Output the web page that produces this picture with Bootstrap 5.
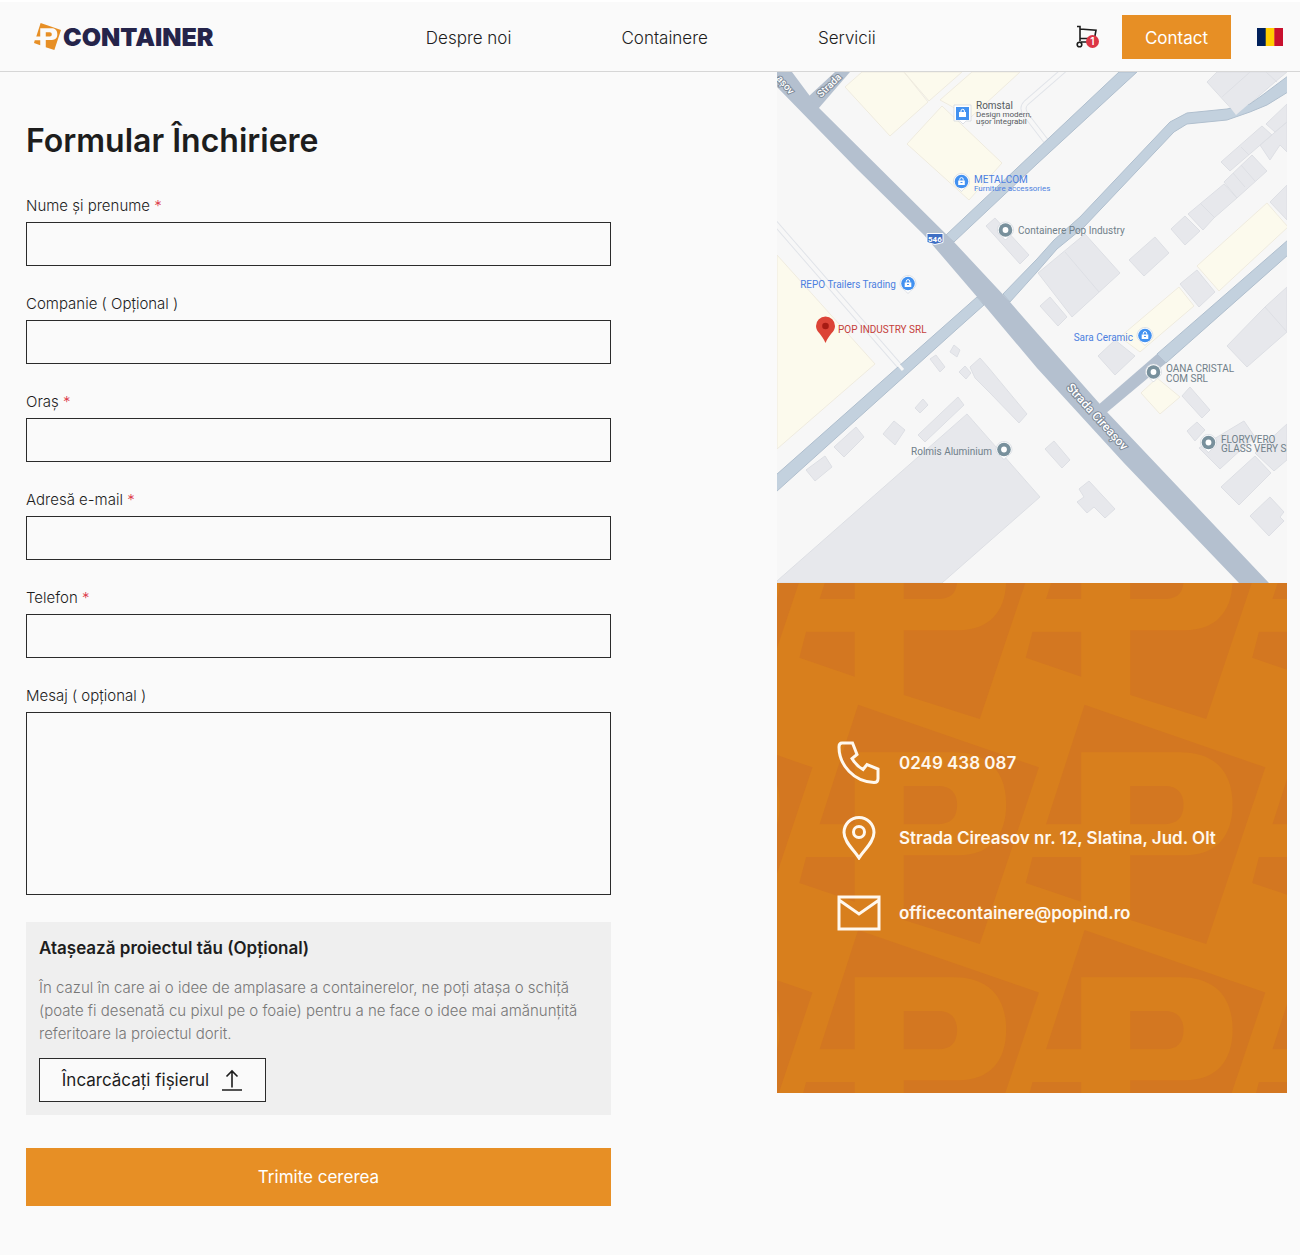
<!DOCTYPE html>
<html lang="ro">
<head>
<meta charset="utf-8">
<meta name="viewport" content="width=device-width, initial-scale=1">
<title>Formular Închiriere</title>
<link href="https://cdn.jsdelivr.net/npm/bootstrap@5.3.0/dist/css/bootstrap.min.css" rel="stylesheet">
<style>
body{background:#fafafa;color:#1d1d1d;font-family:"Inter","Liberation Sans",sans-serif;font-size:15px;line-height:24px}
.site-head{border-top:2px solid #fff;border-bottom:1px solid #d6d6d6;height:72px;padding:0 17px 0 34px}
.brand{color:#25244a;font-weight:900;font-size:25px;line-height:28px;gap:2px;text-decoration:none}
.brand svg{width:27px;height:27px}
.main-links{gap:110px;padding:2px 0 0 12px;font-size:17px;font-weight:300}
.main-links a{color:#1d1d1d;text-decoration:none}
.tools{gap:22px}
.cart svg{display:block;width:24px;height:26px}
.cart-count{position:absolute;left:10px;top:11px;width:13px;height:13px;font-size:10px;line-height:13px;background:#dc3545;color:#fff;border-radius:50%;text-align:center;font-weight:600}
.btn-brand{--bs-btn-color:#fff;--bs-btn-bg:#e78f25;--bs-btn-hover-color:#fff;--bs-btn-hover-bg:#d87f1d;--bs-btn-active-bg:#d87f1d;--bs-btn-active-color:#fff;--bs-btn-border-radius:0;--bs-btn-border-width:0;font-size:17px;font-weight:400;padding:8px 12px 6px}
.btn-contact{width:109px;height:44px;line-height:30px}
.flag{width:26px;height:18px;display:block}
.form-col{width:47%;padding-left:26px}
.side-col{width:40.23%;padding-right:13px}
h1{font-size:32px;line-height:40px;font-weight:600;margin:49px 0 33px}
.field{margin-bottom:26px}
.field label{display:block;font-weight:300;margin-bottom:4px;font-size:15px}
.field label span{color:#dc3545}
.field .form-control{height:44px;border:1px solid #2b2b2b;border-radius:0;background:transparent}
.field textarea.form-control{height:183px;resize:none}
.attach{background:#efefef;padding:13px;margin-top:27px}
.attach h2{font-size:17px;line-height:26px;font-weight:600;margin:0 0 15px}
.attach p{font-size:15px;line-height:23px;font-weight:300;color:#777;margin:0 0 13px}
.btn-upload{--bs-btn-color:#1d1d1d;--bs-btn-bg:#fafafa;--bs-btn-border-color:#2b2b2b;--bs-btn-border-radius:0;width:227px;height:44px;font-size:17px;gap:12px;padding:2px 0 0}
.btn-upload svg{width:22px;height:24px}
.btn-send{height:58px;margin-top:33px;margin-bottom:49px}
.map{display:block;width:100%}
.map text{font-family:Roboto,sans-serif;font-size:10px}
.map .street{font-size:12px}
.map .note{font-size:8px}
.info{background:#d87f1d;aspect-ratio:1;padding:0 60px;color:#fff8ee;font-size:17px;font-weight:600}
.info a{color:inherit;text-decoration:none}
.info .motif{position:absolute;inset:0;width:100%;height:100%}
.info ul{position:relative;gap:31px}
.info li{gap:18px}
.info li svg{width:44px;height:44px;flex:none;fill:none;stroke:#fff8ee;stroke-width:3}
</style>
<script src="https://cdn.jsdelivr.net/npm/bootstrap@5.3.0/dist/js/bootstrap.bundle.min.js" defer></script>
</head>
<body>
<svg width="0" height="0" class="position-absolute" aria-hidden="true">
<defs>
<g id="emblem">
<path d="M262 380L797 565L622 1088L397 1017V825H560C650 825 700 770 700 675C700 570 640 520 545 520H252V733H148Z"/>
<path d="M397 620H500C535 620 555 640 555 676C555 715 535 733 500 733H397ZM108 830H252V963L88 907Z"/>
</g>
<g id="shop"><path d="M-8 0a8 8 0 1 1 16 0c0 5-5 6-8 10c-3-4-8-5-8-10z" fill="#fff" stroke="#c9ced6" stroke-width=".6"/><circle r="6.8" fill="#4291f0"/><rect x="-3.3" y="-1" width="6.6" height="4.5" fill="#fff"/><path d="M-1.7-1v-1.2a1.7 1.7 0 0 1 3.4 0V-1" fill="none" stroke="#fff"/><path d="M-1 1h2" stroke="#4291f0"/></g>
<g id="place"><path d="M-8 0a8 8 0 1 1 16 0c0 5-5 6-8 10c-3-4-8-5-8-10z" fill="#fff" stroke="#c9ced6" stroke-width=".6"/><circle r="6.8" fill="#78909c"/><circle r="2.9" fill="#fff"/></g>
</defs>
</svg>

<header class="site-head d-flex align-items-center justify-content-between">
<a class="brand d-flex align-items-center" href="#"><svg viewBox="88 380 709 708" fill="#e78f25" aria-hidden="true"><use href="#emblem"/></svg><span>CONTAINER</span></a>
<nav class="main-links d-flex"><a href="#">Despre noi</a><a href="#">Containere</a><a href="#">Servicii</a></nav>
<div class="tools d-flex align-items-center">
<a class="cart position-relative" href="#" aria-label="Coș"><svg viewBox="0 0 24 26" fill="none" stroke="#1d1d1d" stroke-width="1.6"><path d="M1 2.5H4V17.5M4 5L20 6.2L18.5 14.5H4M5 18H14"/><circle cx="3.5" cy="20.5" r="2.3"/></svg><span class="cart-count">1</span></a>
<button type="button" class="btn btn-brand btn-contact">Contact</button>
<svg class="flag ms-1" viewBox="0 0 26 18" role="img" aria-label="Română"><path fill="#00205b" d="M0 0h9v18H0z"/><path fill="#ffcd00" d="M8.700 0h9v18h-9z"/><path fill="#c8102e" d="M17.300 0H26v18h-8.700z"/></svg>
</div>
</header>

<main class="d-flex justify-content-between align-items-start">
<form class="form-col">
<h1>Formular Închiriere</h1>
<div class="field"><label for="nume">Nume și prenume <span>*</span></label><input id="nume" type="text" class="form-control"></div>
<div class="field"><label for="companie">Companie ( Opțional )</label><input id="companie" type="text" class="form-control"></div>
<div class="field"><label for="oras">Oraș <span>*</span></label><input id="oras" type="text" class="form-control"></div>
<div class="field"><label for="email">Adresă e-mail <span>*</span></label><input id="email" type="email" class="form-control"></div>
<div class="field"><label for="telefon">Telefon <span>*</span></label><input id="telefon" type="tel" class="form-control"></div>
<div class="field"><label for="mesaj">Mesaj ( opțional )</label><textarea id="mesaj" class="form-control"></textarea></div>
<section class="attach">
<h2>Atașează proiectul tău (Opțional)</h2>
<p>În cazul în care ai o idee de amplasare a containerelor, ne poți atașa o schiță (poate fi desenată cu pixul pe o foaie) pentru a ne face o idee mai amănunțită referitoare la proiectul dorit.</p>
<button type="button" class="btn btn-upload d-flex align-items-center justify-content-center">Încarcăcați fișierul <svg viewBox="0 0 22 24" fill="none" stroke="#1d1d1d" stroke-width="1.600" aria-hidden="true"><path d="M11 18.500V2M5.500 7.500L11 2l5.500 5.500M1 21h20"/></svg></button>
</section>
<button type="submit" class="btn btn-brand btn-send w-100">Trimite cererea</button>
</form>

<aside class="side-col">
<svg class="map" viewBox="777 72 510 511" role="img" aria-label="Hartă">
<path fill="#f7f7f7" d="M777 72h510v511H777z"/>
<g fill="none"><path stroke="#e1e4e9" stroke-width="6" d="M775 223L903 370M1064 70L1026 103Q1021 108 1026 115L1046 141"/><path stroke="#f7f7f7" stroke-width="4" d="M775 223L903 370M1064 70L1026 103Q1021 108 1026 115L1046 141"/></g>
<g fill="#fcfaed" stroke="#efebdf">
<path d="M845 87L862 72H904L928 102L890 136ZM904 72L929 101L962 72ZM940 100L972 72H1020L971 117ZM907 144L942 106L1002 163L969 200ZM777 255L875 364L777 449ZM1197 266L1267 203L1288 227L1219 291ZM1120 337L1179 287L1194 306L1140 352ZM1141 393L1157 378L1180 397L1160 414Z"/>
</g>
<g fill="#e7e8ec" stroke="#dddfe4">
<path d="M1207 82L1217 72H1287L1275 82L1237 115ZM1266 124L1287 104V122L1275 132ZM1221 162L1262 126L1272 135L1230 171ZM1260 145L1287 122V152L1280 145L1270 160ZM1224 182L1252 155L1267 171L1237 198ZM1188 214L1224 184L1237 198L1214 218L1203 230ZM1171 229L1185 216L1200 231L1185 245ZM1129 260L1155 237L1169 253L1144 276ZM1038 273L1085 234L1120 273L1072 317ZM1040 306L1050 297L1067 317L1058 326ZM1180 284L1197 270L1215 292L1199 307ZM1270 202L1287 185V220ZM1227 346L1265 307L1287 287V332L1247 367ZM1098 356L1115 340L1135 356L1115 375ZM1182 396L1190 387L1210 410L1202 418ZM1187 431L1197 422L1205 430L1195 441ZM1199 448L1244 421L1255 437L1220 469ZM1255 453L1287 424V460L1274 471ZM1221 487L1255 456L1271 473L1239 505ZM1250 516L1270 497L1284 512L1280 517L1284 521L1269 536ZM1045 449L1054 441L1070 460L1062 468ZM1079 489L1089 481L1115 509L1105 518L1094 507L1087 513L1077 502L1084 497ZM777 581L967 414L1040 497L942 583H777ZM918 435L958 397L964 405L925 442ZM834 447L856 427L864 437L844 457ZM806 470L825 456L832 467L815 481ZM883 434L894 421L905 430L895 445ZM915 408L923 399L928 405L920 413ZM930 359L936 355L945 367L940 372ZM950 352L954 345L960 350L957 357ZM959 372L965 366L971 373L966 379ZM970 367L980 358L988 367L1027 414L1019 423L990 393L975 378ZM986 226L995 218L1029 255L1020 264Z"/>
<path fill="none" d="M1222 97L1250 72M1065 252L1099 292M1241 147L1249 155M1233 173L1245 187M1241 165L1255 181M1201 204L1215 218M1265 307L1287 332M1266 72L1277 82"/>
</g>
<g fill="#c3d1de" stroke="#b0bfce">
<path d="M1119 72L946 235L954 242L1037 164L1137 72Z"/>
<path d="M1288 76L1264 94L1250 104L1227 109L1187 113L1170 122L1080 217L1054 240L1037 259L1003 294L1010 302L1037 272L1057 249L1084 227L1174 132L1187 124L1227 120L1250 112L1267 105L1288 92Z"/>
<path d="M977 297L776 475V492L956 330L984 305Z"/>
<path d="M1288 240L1157 354L1166 363L1288 255Z"/>
</g>
<path fill="#e7e8ec" d="M1222 97L1236 115L1258 96L1240 84Z"/>
<g fill="#b4c0cf">
<path d="M792 72L818 107L954 242L1010 302L1037 333L1107 412L1269 583H1239L1124 463L1037 368L984 305L924 235L857 169L777 87V72Z"/>
<path d="M835 72L808 97L818 109L850 72Z"/>
<path d="M1157 354L1097 406L1105 414L1166 363Z"/>
</g>
<path fill="none" stroke="#f7f7f7" stroke-width="3" d="M896 362L903 370"/>
<g fill="#fff" stroke="#7d8997" stroke-width="2" paint-order="stroke" font-weight="500">
<text class="street" transform="translate(1066 388) rotate(48)">Strada Cireașov</text>
<text transform="translate(821 98) rotate(-44)">Strada</text>
<text transform="translate(776 79) rotate(49)">așov</text>
</g>
<path fill="#3f6fc4" stroke="#fff" d="M927 233.500h16v9l-8 2-8-2z"/><text x="928" y="242" class="note" fill="#fff" font-weight="700">546</text>
<path fill="#fff" stroke="#c9ced6" stroke-width=".6" d="M954 105h17v16h-5l-3 3-3-3h-6z"/><path fill="#4291f0" d="M956 107h13v13h-13z"/><path fill="#fff" d="M959 112h7v5h-7z"/><path fill="none" stroke="#fff" d="M961 112v-1a1.700 1.700 0 0 1 3.400 0v1"/>
<use href="#shop" x="961.500" y="181.500"/><use href="#shop" x="908" y="283.500"/><use href="#shop" x="1145" y="335.500"/>
<use href="#place" x="1005.500" y="230"/><use href="#place" x="1004" y="449.500"/><use href="#place" x="1153.500" y="372"/><use href="#place" x="1208.500" y="442.500"/>
<g fill="#555a60"><text x="976" y="109">Romstal</text><text x="976" y="117" class="note">Design modern,</text><text x="976" y="124" class="note">ușor integrabil</text></g>
<g fill="#4c7fe0"><text x="974" y="183">METALCOM</text><text x="974" y="191" class="note">Furniture accessories</text><text x="896" y="288" text-anchor="end">REPO Trailers Trading</text><text x="1133" y="341" text-anchor="end">Sara Ceramic</text></g>
<g fill="#70808a"><text x="1018" y="234">Containere Pop Industry</text><text x="992" y="455" text-anchor="end">Rolmis Aluminium</text><text x="1166" y="372">OANA CRISTAL</text><text x="1166" y="382">COM SRL</text><text x="1221" y="443">FLORYVERO</text><text x="1221" y="452">GLASS VERY SRL</text></g>
<path fill="#dc4437" d="M816 326a9.400 9.400 0 1 1 19 0c0 6-6 8-9.500 17c-3.500-9-9.500-11-9.500-17z"/><circle cx="825.500" cy="326" r="3.300" fill="#a61b13"/>
<text x="838" y="333" fill="#c5403a">POP INDUSTRY SRL</text>
</svg>
<section class="info position-relative d-flex align-items-center">
<svg class="motif" viewBox="22 10 1509 1528" preserveAspectRatio="xMidYMid slice" fill="#d37721" aria-hidden="true">
<g id="motif-row"><use href="#emblem" x="-670"/><use href="#emblem"/><use href="#emblem" x="670"/><use href="#emblem" x="1340"/></g>
<use href="#motif-row" y="-666"/><use href="#motif-row" y="666"/>
</svg>
<ul class="list-unstyled d-flex flex-column mb-0 text-nowrap">
<li class="d-flex align-items-center"><svg viewBox="0 0 44 44" aria-hidden="true"><path d="M5 2H15.500L20 13.500L15 17.500Q19.500 25 26 28.500L30 23.500L41 28V37.500Q41 41.500 37 41.500C17 41 2 24 2 6Q2 2 5 2Z"/></svg><a href="tel:0249438087">0249 438 087</a></li>
<li class="d-flex align-items-center"><svg viewBox="0 0 44 44" aria-hidden="true"><path d="M22 42C17 34 7 26 7 16.500A15 15 0 0 1 37 16.500C37 26 27 34 22 42Z"/><circle cx="22" cy="16" r="5.500"/></svg><span>Strada Cireasov nr. 12, Slatina, Jud. Olt</span></li>
<li class="d-flex align-items-center"><svg viewBox="0 0 44 44" aria-hidden="true"><path d="M2 6H42V38H2ZM2 9L22 23L42 9"/></svg><a href="mailto:officecontainere@popind.ro">officecontainere@popind.ro</a></li>
</ul>
</section>
</aside>
</main>
</body>
</html>
